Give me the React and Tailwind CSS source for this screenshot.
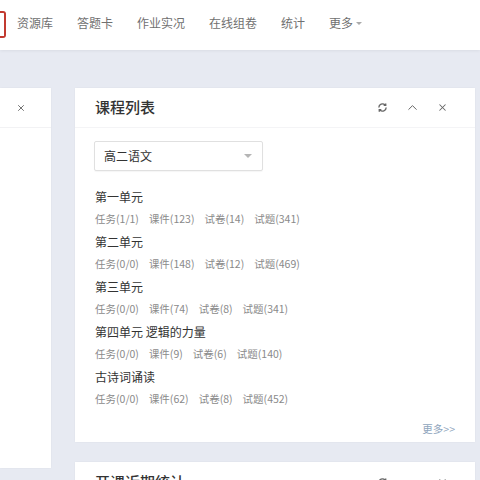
import React from "react";
import { ChevronUp, X } from "lucide-react";

const units = [
    { name: "第一单元", stats: ["任务(1/1)", "课件(123)", "试卷(14)", "试题(341)"] },
    { name: "第二单元", stats: ["任务(0/0)", "课件(148)", "试卷(12)", "试题(469)"] },
    { name: "第三单元", stats: ["任务(0/0)", "课件(74)", "试卷(8)", "试题(341)"] },
    { name: "第四单元 逻辑的力量", stats: ["任务(0/0)", "课件(9)", "试卷(6)", "试题(140)"] },
    { name: "古诗词诵读", stats: ["任务(0/0)", "课件(62)", "试卷(8)", "试题(452)"] },
];

const navItems = ["资源库", "答题卡", "作业实况", "在线组卷", "统计"];

function RefreshIcon() {
    return (
        <svg width="11" height="11" viewBox="0 0 12 12" fill="none" stroke="#666" strokeWidth="1.5">
            <path d="M10 6a4 4 0 0 1-6.8 2.8" />
            <path d="M2 6a4 4 0 0 1 6.8-2.8" />
            <path d="M9.5 1.5v2.2H7.3" />
            <path d="M2.5 10.5V8.3h2.2" />
        </svg>
    );
}

function PanelTools() {
    return (
        <div className="flex items-center gap-[17px] text-[#666]">
            <RefreshIcon />
            <ChevronUp size={15} strokeWidth={1.6} />
            <X size={11} strokeWidth={2.2} />
        </div>
    );
}

export default function App() {
    return (
        <div
            className="w-[480px] h-[480px] overflow-hidden bg-[#e7eaf2]"
            style={{ fontFamily: '"Noto Sans CJK SC", "Noto Sans", sans-serif' }}
        >
            {/* Top nav */}
            <nav className="h-[50px] bg-white flex items-center shadow-[0_1px_3px_rgba(0,0,0,0.06)]">
                <div className="w-[6px] h-[27px] border-y-2 border-r-2 border-[#c23a30] rounded-r-[3px] -mt-[2px]"></div>
                <div className="flex items-center gap-[24px] ml-[11px] text-[12px] text-[#707070] -mt-[4px]">
                    {navItems.map((n) => (
                        <span key={n}>{n}</span>
                    ))}
                    <span className="flex items-center">
                        更多
                        <span className="ml-[3px] border-x-[3px] border-x-transparent border-t-[3px] border-t-[#aaa]"></span>
                    </span>
                </div>
            </nav>

            <main className="flex pt-[38px]">
                {/* Left (cut off) panel */}
                <div className="w-[51px] h-[380px] bg-white shrink-0 shadow-[0_0_2px_rgba(0,0,0,0.05)]">
                    <div className="h-[40px] flex items-center pl-[16px] border-b border-[#f2f2f4]">
                        <X size={10} strokeWidth={2.2} className="text-[#666]" />
                    </div>
                </div>

                <div className="ml-[24px] w-[400px] flex flex-col gap-[20px]">
                    {/* Course list panel */}
                    <section className="h-[354px] bg-white flex flex-col shadow-[0_0_2px_rgba(0,0,0,0.05)]">
                        <header className="h-[40px] flex items-center justify-between pl-[20px] pr-[27px] border-b border-[#f4f4f6]">
                            <h2 className="text-[15px] font-medium text-[#333]">课程列表</h2>
                            <PanelTools />
                        </header>
                        <div className="px-[19px] pt-[13px] flex-1 flex flex-col">
                            <div className="w-[169px] h-[30px] border border-[#e0e0e0] rounded-[2px] flex items-center justify-between pl-[9px] pr-[10px] shadow-[0_1px_1px_rgba(0,0,0,0.04)]">
                                <span className="text-[12px] text-[#333]">高二语文</span>
                                <span className="border-x-[4px] border-x-transparent border-t-[4px] border-t-[#b5b5b5]"></span>
                            </div>
                            <div className="mt-[15px] pl-[1px]">
                                {units.map((u) => (
                                    <div key={u.name}>
                                        <div className="h-[22px] leading-[22px] text-[12px] text-[#333]">{u.name}</div>
                                        <div className="h-[23px] leading-[22px] flex gap-[10px] text-[10.5px] text-[#8a8a8a]">
                                            {u.stats.map((s) => (
                                                <span key={s}>{s}</span>
                                            ))}
                                        </div>
                                    </div>
                                ))}
                            </div>
                            <div className="mt-auto mb-[5px] self-end pr-[1px] text-[10.5px] text-[#8fa5bd]">更多&gt;&gt;</div>
                        </div>
                    </section>

                    {/* Stats panel (cut off) */}
                    <section className="h-[120px] bg-white shadow-[0_0_2px_rgba(0,0,0,0.05)]">
                        <header className="h-[40px] flex items-center justify-between pl-[20px] pr-[27px]">
                            <h2 className="text-[15px] font-medium text-[#333]">开课近期统计</h2>
                            <PanelTools />
                        </header>
                    </section>
                </div>
            </main>
        </div>
    );
}
